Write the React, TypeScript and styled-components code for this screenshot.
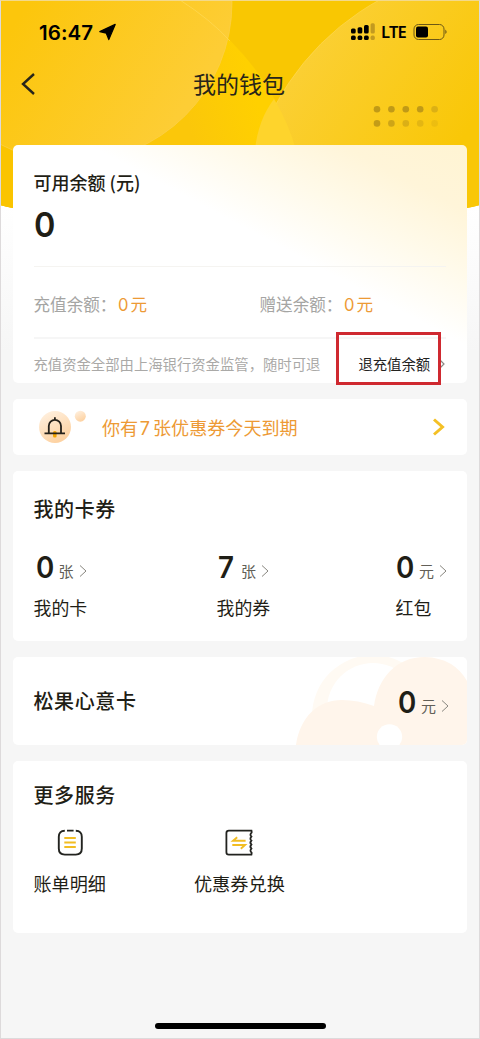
import React from "react";
import styled, { createGlobalStyle } from "styled-components";

const GlobalStyle = createGlobalStyle`
  * { box-sizing: border-box; }
  body { margin: 0; background: #f6f6f6; }
`;

const Page = styled.main`
  position: relative;
  width: 480px;
  height: 1039px;
  padding: 0 12px;
  display: flex;
  flex-direction: column;
  overflow: hidden;
  border: 1px solid #dddadb;
  border-top-color: #f3d98a;
  background: linear-gradient(#ffffff 205px, #f6f6f6 350px);
  color: #1f1e16;
  font-family: Inter, "Noto Sans CJK SC", sans-serif;
`;

const Backdrop = styled.svg`
  position: absolute;
  top: 0;
  left: 0;
`;

const Text = styled.span<{ $size: number; $weight?: number; $color?: string; $track?: number }>`
  font-family: "Noto Sans CJK SC", sans-serif;
  font-size: ${(p) => p.$size}px;
  font-weight: ${(p) => p.$weight ?? 400};
  color: ${(p) => p.$color ?? "inherit"};
  letter-spacing: ${(p) => p.$track ?? 0}px;
  line-height: 24px;
  white-space: pre;
`;

const Numeral = styled.span<{ $gap: number }>`
  font-family: Inter, sans-serif;
  line-height: 1;
  margin: 0 ${(p) => p.$gap}px 0 1.5px;
`;

const Digit = styled.span<{ $size: number; $weight?: number; $width: number }>`
  width: ${(p) => p.$width}px;
  font-family: Inter, sans-serif;
  font-size: ${(p) => p.$size}px;
  font-weight: ${(p) => p.$weight ?? 600};
  line-height: 36px;
  transform: scaleX(0.94);
  transform-origin: left;
`;

const StatusBar = styled.div`
  position: relative;
  height: 62px;
  padding: 19px 20px 0 26px;
  display: flex;
  justify-content: space-between;
`;

const StatusGroup = styled.div`
  height: 24px;
  display: flex;
  align-items: center;
  color: #000;
`;

const Clock = styled.span`
  width: 60px;
  font-size: 20.5px;
  font-weight: 600;
  letter-spacing: 0.1px;
`;

const Network = styled.span`
  width: 32px;
  font: 600 16.5px/24px "Noto Sans", sans-serif;
  letter-spacing: -0.8px;
`;

const NavBar = styled.header`
  position: relative;
  height: 82px;
  padding: 8px 9px 0 7px;
  display: grid;
  grid-template-columns: 40px 1fr 40px;
  justify-items: center;
`;

const BackIcon = styled.svg`
  justify-self: start;
  margin-top: 1px;
`;

const Card = styled.section<{ $height: number; $tint?: boolean }>`
  position: relative;
  flex: none;
  height: ${(p) => p.$height}px;
  margin-bottom: 16px;
  padding: 0 21px 0 20.5px;
  border-radius: 5px;
  background: ${(p) =>
    p.$tint ? "linear-gradient(208deg, #fff4d3 0%, #fff5d9 14%, #fffaea 27%, #ffffff 42%)" : "#ffffff"};
`;

const BalanceTop = styled.div`
  height: 122px;
  padding-top: 25px;
  display: flex;
  flex-direction: column;
  gap: 13px;
  border-bottom: 1px solid #f5f4f1;
`;

const BalanceSplit = styled.div`
  height: 72px;
  display: grid;
  grid-template-columns: 226px 1fr;
  align-items: center;
  border-bottom: 2px solid #f6f6f6;
`;

const Amount = styled.div`
  display: flex;
  padding-top: 4px;
`;

const Supervision = styled.div`
  height: 50px;
  display: flex;
  align-items: center;
  gap: 6px;
`;

const RefundLink = styled.div`
  display: flex;
  align-items: center;
  gap: 9px;
  margin-left: 32px;
`;

const Highlight = styled.div`
  position: absolute;
  top: 187px;
  left: 323px;
  width: 105px;
  height: 53px;
  z-index: 1;
  border: 3px solid #cf2930;
`;

const Notice = styled(Card)`
  display: flex;
  align-items: center;
  padding: 0 21px 0 25px;
`;

const NoticeText = styled(Text)`
  flex: 1;
  padding-left: 14px;
`;

const SectionTitle = styled.h2<{ $top: number }>`
  margin: 0;
  padding-top: ${(p) => p.$top}px;
  font: 500 20px/28px "Noto Sans CJK SC", sans-serif;
  letter-spacing: 0.6px;
`;

const Stats = styled.div`
  display: grid;
  grid-template-columns: 183px 179px 1fr;
  margin-top: 29px;
`;

const Stat = styled.div`
  display: flex;
  flex-direction: column;
  gap: 13px;
`;

const Value = styled.div<{ $indent: number }>`
  height: 30px;
  padding-left: ${(p) => p.$indent}px;
  display: flex;
  align-items: center;
`;

const Unit = styled(Text)`
  padding-top: 7px;
  margin-right: 5px;
`;

const UnitArrow = styled.svg`
  margin-top: 8px;
`;

const GiftCard = styled(Card)`
  display: flex;
  justify-content: space-between;
  padding-right: 17px;
  overflow: hidden;
`;

const GiftArt = styled.svg`
  position: absolute;
  top: 0;
  right: 0;
`;

const GiftValue = styled.div`
  position: relative;
  padding-top: 30px;
`;

const Services = styled.div`
  display: flex;
  gap: 88px;
  margin-top: 20px;
`;

const Service = styled.div`
  display: flex;
  flex-direction: column;
  align-items: center;
  gap: 14px;
`;

const HomeBar = styled.div`
  width: 171px;
  height: 6px;
  margin: auto 0 9px 141.5px;
  border-radius: 3px;
  background: #000;
`;

function HeaderBackdrop() {
  return (
    <Backdrop width="478" height="210" viewBox="1 1 478 210">
      <defs>
        <clipPath id="header">
          <path d="M0 0H480V205Q474 207 467 208Q240 236 13 208Q6 207 0 205Z" />
        </clipPath>
        <linearGradient id="left" gradientUnits="userSpaceOnUse" x1="10" y1="30" x2="170" y2="130">
          <stop offset="0" stopColor="#fcc60c" />
          <stop offset="1" stopColor="#fdcd35" />
        </linearGradient>
        <linearGradient id="centre" gradientUnits="userSpaceOnUse" x1="190" y1="130" x2="260" y2="110">
          <stop offset="0" stopColor="#fbc70a" />
          <stop offset="1" stopColor="#ffd000" />
        </linearGradient>
        <linearGradient id="right" gradientUnits="userSpaceOnUse" x1="295" y1="40" x2="455" y2="150">
          <stop offset="0" stopColor="#fbd038" />
          <stop offset="1" stopColor="#f9c707" />
        </linearGradient>
      </defs>
      <g clipPath="url(#header)">
        <rect width="480" height="240" fill="#f9c702" />
        <circle cx="47" cy="225" r="260" fill="url(#centre)" />
        <circle cx="504" cy="227" r="259" fill="url(#right)" stroke="#ffda57" strokeWidth=".6" />
        <path d="M255 150Q258 120 274 99Q289 124 296 150Z" fill="#fed42c" />
        <path d="M0 0H120V230H0Z" fill="#fac400" />
        <circle cx="73" cy="3" r="159" fill="url(#left)" stroke="#fbd153" strokeWidth=".6" />
        <path d="M180 0Q211 20 230 41" fill="none" stroke="#ffda57" strokeWidth=".7" />
      </g>
      {[0, 1, 2, 3, 4].map((i) => (
        <g key={i} fill="#bd9717">
          <circle cx={377 + i * 14.4} cy="109.3" r="3.3" opacity={i === 4 ? 0.5 : 0.95} />
          <circle cx={377 + i * 14.4} cy="123.4" r="3.3" opacity={[0.9, 0.72, 0.52, 0.36, 0.22][i]} />
        </g>
      ))}
    </Backdrop>
  );
}

function SignalIcon() {
  return (
    <svg width="31" height="20" viewBox="0 0 31 20">
      <g fill="#000">
        <rect x="1" y="6.5" width="4.7" height="5" rx="1.5" />
        <rect x="7.6" y="5.3" width="4.7" height="6.2" rx="1.5" />
        <rect x="14" y="3" width="4.7" height="8.5" rx="1.5" />
        <rect x="1" y="13.6" width="4.7" height="4.5" rx="1.6" />
        <rect x="7.6" y="13.6" width="4.7" height="4.5" rx="1.6" />
        <rect x="14" y="13.6" width="4.7" height="4.5" rx="1.6" />
      </g>
      <g fill="#c29a20">
        <rect x="20.6" y="1.3" width="4.2" height="10.2" rx="1.5" />
        <rect x="20.6" y="13.6" width="4.2" height="4.5" rx="1.6" />
      </g>
    </svg>
  );
}

function BatteryIcon() {
  return (
    <svg width="34" height="18" viewBox="0 0 34 18">
      <rect x="1" y="1.5" width="30" height="15" rx="4.5" fill="none" stroke="#6c5815" />
      <rect x="3" y="3.5" width="12" height="11" rx="2" fill="#000" />
      <path d="M32.3 6.5Q35 9 32.3 11Z" fill="#6c5815" />
    </svg>
  );
}

function BellIcon() {
  return (
    <svg width="50" height="40" viewBox="0 0 50 40">
      <defs>
        <linearGradient id="bellDisc" x2="0.5" y2="1">
          <stop stopColor="#fff3e5" />
          <stop offset="1" stopColor="#fdd2a2" />
        </linearGradient>
      </defs>
      <circle cx="17" cy="20" r="16" fill="url(#bellDisc)" />
      <circle cx="42.3" cy="9.2" r="5.5" fill="url(#bellDisc)" />
      <rect x="15" y="24" width="3.6" height="6.5" rx="1.5" fill="#f5a400" />
      <path
        d="M6.5 26.3H27M10.8 26V18.9a6.1 6.1 0 0 1 12.2 0V26M16.9 13V10.3"
        fill="none"
        stroke="#25211a"
        strokeWidth="1.8"
      />
    </svg>
  );
}

function BillIcon() {
  return (
    <svg width="28" height="28" viewBox="0 0 28 28" fill="none" strokeWidth="1.9">
      <path
        d="M8.8 1.8Q2.8 1.8 2.8 7.8V19.6Q2.8 25.6 8.8 25.6H19.8Q25.8 25.6 25.8 19.6V7.8Q25.8 1.8 19.8 1.8M11 1.6H17.6"
        stroke="#22231f"
      />
      <path d="M8.3 8.9H19.8M8.3 13.4H19.8M8.3 17.9H19.8" stroke="#f2bd22" strokeWidth="2" />
    </svg>
  );
}

function CouponIcon() {
  return (
    <svg width="28" height="28" viewBox="0 0 28 28" fill="none" strokeWidth="1.8">
      <path
        d="M27.2 1.6H3.8Q1.4 1.6 1.4 4V23.2Q1.4 25.6 3.8 25.6H27.2M26.6 1.6V3.6Q24.4 5.4 26.4 7.6Q24.4 9.7 26.4 11.6Q24.4 13.6 26.4 15.6Q24.4 17.6 26.4 19.6Q24.4 21.8 26.6 23.6V25.6"
        stroke="#22231f"
      />
      <path d="M20.6 11.8H8L12.2 8.2M7.3 16H20L15.8 19.7" stroke="#f2bd22" strokeWidth="1.9" />
    </svg>
  );
}

const Arrow = () => (
  <UnitArrow width="9" height="14" viewBox="0 0 9 14">
    <path d="M1 1.5L7 7L1 12.5" fill="none" stroke="#88867f" />
  </UnitArrow>
);

function Quantity({ value, unit, indent }: { value: string; unit: string; indent: number }) {
  return (
    <Value $indent={indent}>
      <Digit $size={29.5} $width={23}>{value}</Digit>
      <Unit $size={15} $color="#625f58">{unit}</Unit>
      <Arrow />
    </Value>
  );
}

const totals = [
  { value: "0", unit: "张", label: "我的卡", indent: 2 },
  { value: "7", unit: "张", label: "我的券", indent: 1.5 },
  { value: "0", unit: "元", label: "红包", indent: 0.5 },
];

export default function App() {
  return (
    <>
      <GlobalStyle />
      <Page>
        <HeaderBackdrop />
        <StatusBar>
          <StatusGroup>
            <Clock>16:47</Clock>
            <svg width="18" height="18" viewBox="0 0 18 18">
              <path d="M.8 8.6L16.2 1.4L9.8 16.6L7.3 10.2Z" fill="#000" stroke="#000" strokeWidth="1.2" strokeLinejoin="round" />
            </svg>
          </StatusGroup>
          <StatusGroup>
            <SignalIcon />
            <Network>LTE</Network>
            <BatteryIcon />
          </StatusGroup>
        </StatusBar>
        <NavBar>
          <BackIcon width="18" height="24" viewBox="0 0 18 24">
            <path d="M14 2L3 12L14 22" fill="none" stroke="#27251a" strokeWidth="2.4" />
          </BackIcon>
          <Text $size={23} $color="#27251a">我的钱包</Text>
        </NavBar>

        <Card $height={238} $tint>
          <BalanceTop>
            <Text $size={18} $weight={500}>可用余额 (元)</Text>
            <Digit $size={34.5} $width={30}>0</Digit>
          </BalanceTop>
          <BalanceSplit>
            {["充值余额：", "赠送余额："].map((label) => (
              <Amount key={label}>
                <Text $size={16.6} $color="#a5a5a3">{label}</Text>
                <Text $size={16.6} $color="#ed9a35">
                  <Numeral $gap={2}>0</Numeral>元
                </Text>
              </Amount>
            ))}
          </BalanceSplit>
          <Supervision>
            <Text $size={14.35} $color="#aaa9a7">充值资金全部由上海银行资金监管，随时可退</Text>
            <RefundLink>
              <Text $size={14.35} $color="#24231f">退充值余额</Text>
              <svg width="8" height="10" viewBox="0 0 8 10">
                <path d="M1 1L5 5L1 9" fill="none" stroke="#8c8984" strokeWidth="1.2" />
              </svg>
            </RefundLink>
          </Supervision>
          <Highlight />
        </Card>

        <Notice $height={56}>
          <BellIcon />
          <NoticeText $size={18.1} $color="#ed9a35">
            你有<Numeral $gap={3}>7</Numeral>张优惠券今天到期
          </NoticeText>
          <svg width="14" height="20" viewBox="0 0 14 20">
            <path d="M2 2.5L10.5 10L2 17.5" fill="none" stroke="#f4c025" strokeWidth="3" />
          </svg>
        </Notice>

        <Card $height={170}>
          <SectionTitle $top={24}>我的卡券</SectionTitle>
          <Stats>
            {totals.map((item) => (
              <Stat key={item.label}>
                <Quantity value={item.value} unit={item.unit} indent={item.indent} />
                <Text $size={17.9}>{item.label}</Text>
              </Stat>
            ))}
          </Stats>
        </Card>

        <GiftCard $height={88}>
          <GiftArt width="172" height="88" viewBox="295 657 172 88">
            <circle cx="373" cy="716" r="61" fill="#fffaf3" />
            <circle cx="373" cy="709" r="46" fill="#ffffff" />
            <path
              d="M296 745C300 717 318 700 342 700Q358 700 374 706C378 678 396 657 425 657Q454 658 467 681V745Z"
              fill="#fff5eb"
            />
            <circle cx="389.5" cy="737" r="12.7" fill="#ffffff" />
          </GiftArt>
          <SectionTitle $top={30}>松果心意卡</SectionTitle>
          <GiftValue>
            <Quantity value="0" unit="元" indent={0} />
          </GiftValue>
        </GiftCard>

        <Card $height={172}>
          <SectionTitle $top={20}>更多服务</SectionTitle>
          <Services>
            <Service>
              <BillIcon />
              <Text $size={18.1}>账单明细</Text>
            </Service>
            <Service>
              <CouponIcon />
              <Text $size={18.2}>优惠券兑换</Text>
            </Service>
          </Services>
        </Card>
        <HomeBar />
      </Page>
    </>
  );
}
